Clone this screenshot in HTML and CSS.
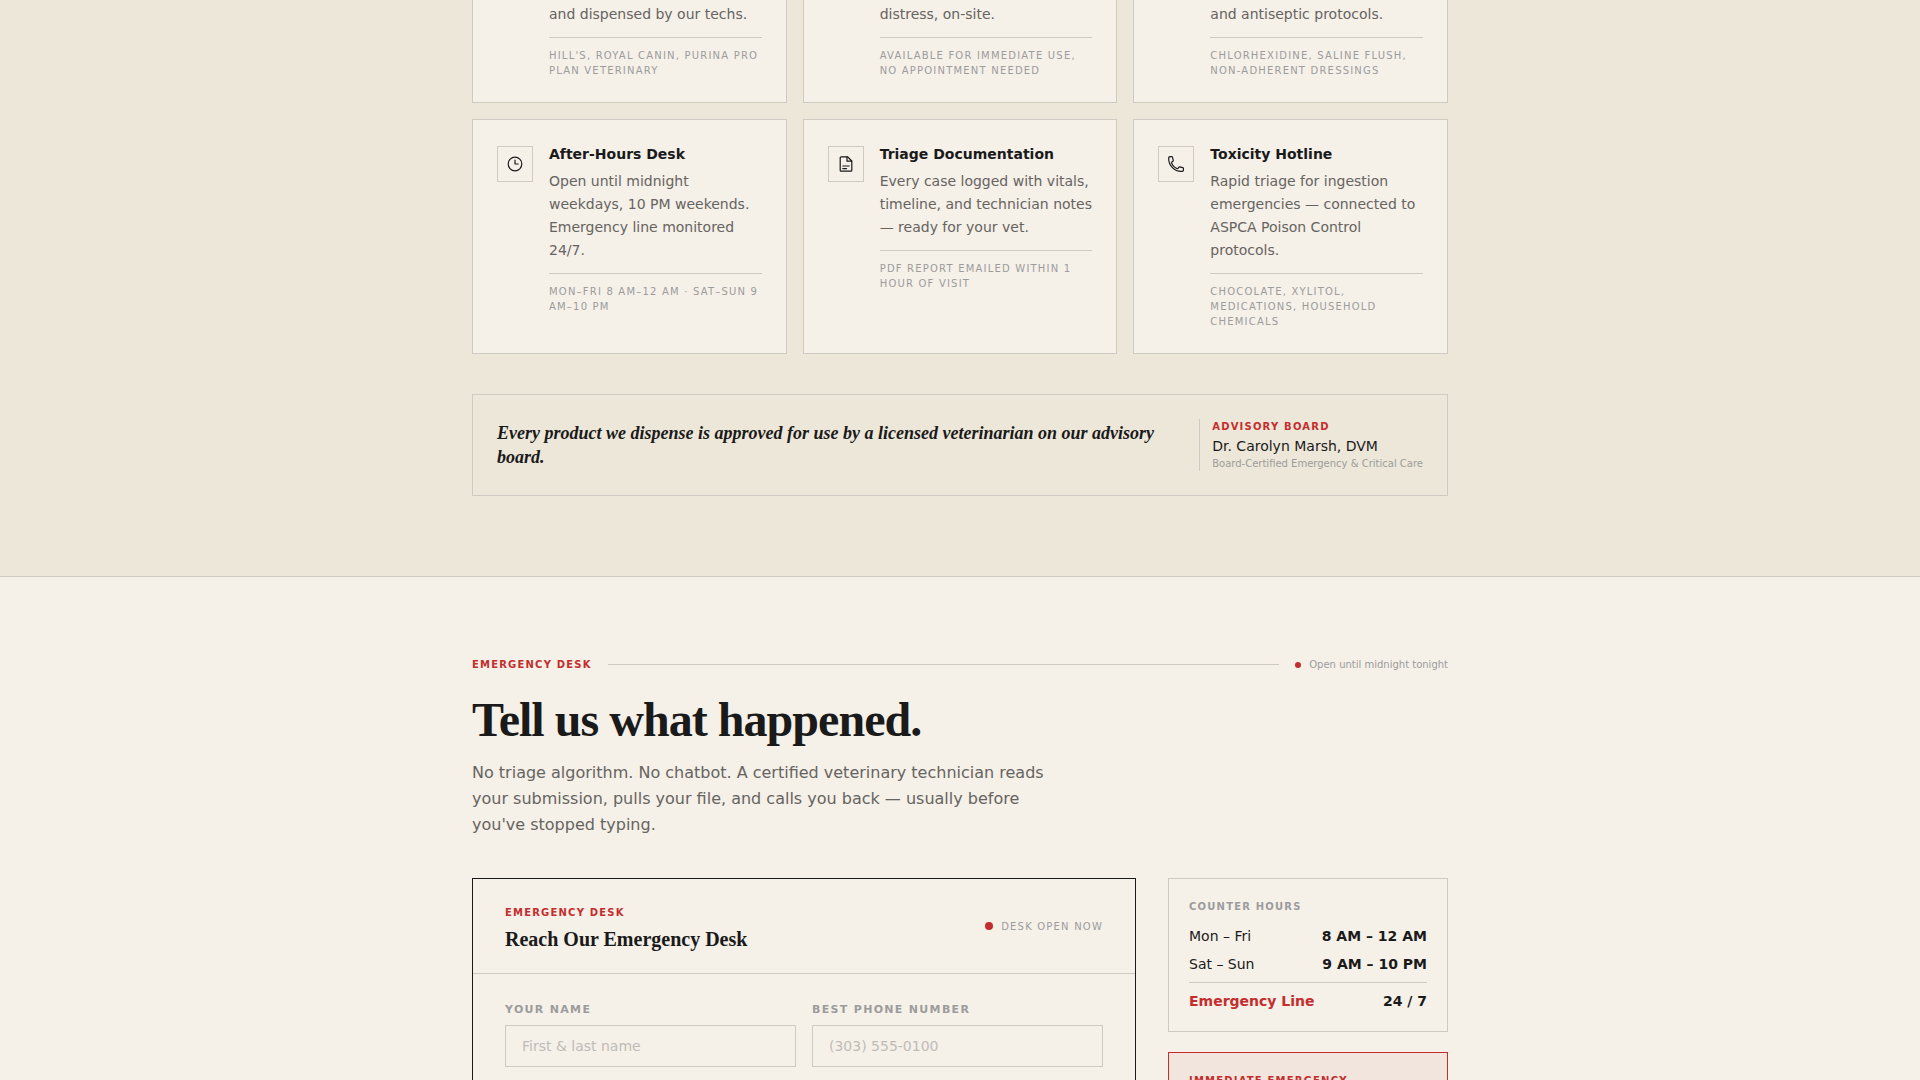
FILE: index.html
```html
<!DOCTYPE html>
<html lang="en">
<head>
  <meta charset="UTF-8" />
  <meta name="viewport" content="width=device-width, initial-scale=1.0" />
  <title>Emergency Desk</title>
  <link rel="stylesheet" href="styles.css">
</head>
<body>
  <section class="supplies">
    <div class="container">
      <div class="card-grid">
        <article class="card card-cut">
          <div class="card-body">
            <p class="card-text">and dispensed by our techs.</p>
            <p class="card-meta">Hill's, Royal Canin, Purina Pro Plan Veterinary</p>
          </div>
        </article>
        <article class="card card-cut">
          <div class="card-body">
            <p class="card-text">distress, on-site.</p>
            <p class="card-meta">Available for immediate use, no appointment needed</p>
          </div>
        </article>
        <article class="card card-cut">
          <div class="card-body">
            <p class="card-text">and antiseptic protocols.</p>
            <p class="card-meta">Chlorhexidine, saline flush, non-adherent dressings</p>
          </div>
        </article>

        <article class="card">
          <div class="card-icon">
            <svg viewBox="0 0 16 16" width="16" height="16" aria-hidden="true">
              <circle cx="8" cy="8" r="6.8" />
              <path d="M8 4v4h3.2" />
            </svg>
          </div>
          <div class="card-body">
            <h3>After-Hours Desk</h3>
            <p class="card-text">Open until midnight weekdays, 10 PM weekends. Emergency line monitored 24/7.</p>
            <p class="card-meta">Mon–Fri 8 AM–12 AM · Sat–Sun 9 AM–10 PM</p>
          </div>
        </article>
        <article class="card">
          <div class="card-icon">
            <svg viewBox="0 0 16 16" width="16" height="16" aria-hidden="true">
              <path d="M9.5 .8H3.1a.9.9 0 0 0-.9.9v12.6a.9.9 0 0 0 .9.9h9.800a.9.9 0 0 0 .9-.9V5z" />
              <path d="M9 .8v4.400h4.600" />
              <path d="M4.800 10h6.400M4.800 12.600h3.800" />
            </svg>
          </div>
          <div class="card-body">
            <h3>Triage Documentation</h3>
            <p class="card-text">Every case logged with vitals, timeline, and technician notes — ready for your vet.</p>
            <p class="card-meta">PDF report emailed within 1 hour of visit</p>
          </div>
        </article>
        <article class="card">
          <div class="card-icon">
            <svg viewBox="0 0 16 16" width="16" height="16" aria-hidden="true">
              <path d="M.7 2.8C.7 9.6 6.4 15.3 13.2 15.3h1a1.4 1.4 0 0 0 1.3-1.4v-1.2a1 1 0 0 0-.8-1l-2.9-.8a1 1 0 0 0-1 .4l-.8 1.1a.7.7 0 0 1-.8.2A9.3 9.3 0 0 1 3.6 6.9a.7.7 0 0 1 .2-.8l1.1-.8a1 1 0 0 0 .4-1L4.5 1.4a1 1 0 0 0-1-.8H2.1A1.4 1.4 0 0 0 .7 2z" />
            </svg>
          </div>
          <div class="card-body">
            <h3>Toxicity Hotline</h3>
            <p class="card-text">Rapid triage for ingestion emergencies — connected to ASPCA Poison Control protocols.</p>
            <p class="card-meta">Chocolate, xylitol, medications, household chemicals</p>
          </div>
        </article>
      </div>

      <div class="advisory">
        <p class="advisory-quote">Every product we dispense is approved for use by a licensed veterinarian on our advisory board.</p>
        <div class="advisory-person">
          <p class="eyebrow">Advisory Board</p>
          <p class="person-name">Dr. Carolyn Marsh, DVM</p>
          <p class="person-role">Board-Certified Emergency &amp; Critical Care</p>
        </div>
      </div>
    </div>
  </section>

  <section class="desk">
    <div class="container">
      <div class="section-bar">
        <span class="eyebrow">Emergency Desk</span>
        <span class="rule"></span>
        <span class="open-note"><span class="dot dot-small"></span>Open until midnight tonight</span>
      </div>
      <h1>Tell us what happened.</h1>
      <p class="lead">No triage algorithm. No chatbot. A certified veterinary technician reads your submission, pulls your file, and calls you back — usually before you've stopped typing.</p>

      <div class="desk-grid">
        <form class="desk-form">
          <div class="form-head">
            <div>
              <p class="eyebrow">Emergency Desk</p>
              <h2>Reach Our Emergency Desk</h2>
            </div>
            <span class="desk-status"><span class="dot"></span>Desk open now</span>
          </div>
          <div class="form-body">
            <div class="field">
              <label for="name">Your Name</label>
              <input type="text" id="name" placeholder="First &amp; last name" />
            </div>
            <div class="field">
              <label for="phone">Best Phone Number</label>
              <input type="tel" id="phone" placeholder="(303) 555-0100" />
            </div>
          </div>
        </form>

        <aside class="sidebar">
          <div class="hours">
            <h4>Counter Hours</h4>
            <table>
              <tr><th scope="row">Mon – Fri</th><td>8 AM – 12 AM</td></tr>
              <tr><th scope="row">Sat – Sun</th><td>9 AM – 10 PM</td></tr>
              <tr class="line-row"><th scope="row">Emergency Line</th><td>24 / 7</td></tr>
            </table>
          </div>
          <div class="alert">
            <p class="eyebrow">Immediate Emergency</p>
          </div>
        </aside>
      </div>
    </div>
  </section>
</body>
</html>
```
FILE: styles.css
```css
:root {
  --paper: #f5f0e8;
  --sand: #ede7d9;
  --line: #d0cbc2;
  --ink: #1a1a1a;
  --text: #666460;
  --muted: #9c9c9c;
  --red: #c42d2d;
  --serif: "Liberation Serif", Georgia, serif;
}
* {
  box-sizing: border-box;
  margin: 0;
  padding: 0;
}
body {
  height: 100vh;
  overflow: hidden;
  background: var(--paper);
  color: var(--ink);
  font-family: "DejaVu Sans", sans-serif;
  font-size: 14px;
}
.container {
  max-width: 1024px;
  margin: 0 auto;
  padding: 0 24px;
}
.eyebrow {
  color: var(--red);
  font-size: 10px;
  font-weight: bold;
  line-height: 15px;
  letter-spacing: 0.12em;
  text-transform: uppercase;
}

/* service cards */
.supplies {
  background: var(--sand);
  border-bottom: 1px solid var(--line);
  padding-bottom: 80px;
}
.card-grid {
  display: grid;
  grid-template-columns: repeat(3, 1fr);
  gap: 16px;
}
.card {
  display: flex;
  gap: 16px;
  padding: 24px;
  background: var(--paper);
  border: 1px solid var(--line);
}
.card-cut {
  padding-top: 3px;
  padding-left: 76px;
  border-top: none;
}
.card-icon {
  display: flex;
  align-items: center;
  justify-content: center;
  flex-shrink: 0;
  width: 36px;
  height: 36px;
  margin-top: 2px;
  border: 1px solid var(--line);
}
.card-icon svg {
  fill: none;
  stroke: var(--ink);
  stroke-width: 1.2;
  stroke-linecap: round;
  stroke-linejoin: round;
}
.card-body {
  flex: 1;
}
.card h3 {
  margin-bottom: 5px;
  font-size: 14px;
  line-height: 21px;
}
.card-text {
  color: var(--text);
  line-height: 23px;
}
.card-meta {
  margin-top: 11px;
  padding-top: 10px;
  border-top: 1px solid var(--line);
  color: var(--muted);
  font-size: 10px;
  line-height: 15px;
  letter-spacing: 0.12em;
  text-transform: uppercase;
}

/* advisory strip */
.advisory {
  display: flex;
  align-items: center;
  justify-content: space-between;
  gap: 24px;
  margin-top: 40px;
  padding: 24px;
  border: 1px solid var(--line);
}
.advisory-quote {
  font-family: var(--serif);
  font-size: 18px;
  font-style: italic;
  font-weight: bold;
  line-height: 24px;
}
.advisory-person {
  flex-shrink: 0;
  padding-left: 12px;
  border-left: 1px solid var(--line);
}
.person-name {
  margin-top: 2px;
  line-height: 20px;
}
.person-role {
  color: var(--muted);
  font-size: 10px;
  line-height: 15px;
}

/* emergency desk */
.desk {
  padding: 80px 0;
}
.section-bar {
  display: flex;
  align-items: center;
  gap: 16px;
  margin-bottom: 24px;
}
.rule {
  flex: 1;
  height: 1px;
  background: var(--line);
}
.open-note,
.desk-status {
  display: flex;
  align-items: center;
  gap: 8px;
  color: var(--muted);
  font-size: 10px;
  line-height: 15px;
}
.dot {
  width: 8px;
  height: 8px;
  border-radius: 50%;
  background: var(--red);
}
.dot-small {
  width: 6px;
  height: 6px;
}
h1 {
  margin-bottom: 16px;
  font-family: var(--serif);
  font-size: 48px;
  line-height: 48px;
  letter-spacing: -0.02em;
}
.lead {
  max-width: 580px;
  margin-bottom: 40px;
  color: var(--text);
  font-size: 16px;
  line-height: 26px;
}
.desk-grid {
  display: grid;
  grid-template-columns: 1fr 280px;
  gap: 32px;
}
.desk-form {
  border: 1px solid var(--ink);
}
.form-head {
  display: flex;
  align-items: center;
  justify-content: space-between;
  padding: 23px 32px;
  border-bottom: 1px solid var(--line);
}
.form-head .eyebrow {
  margin-bottom: 4px;
  line-height: 22px;
}
.form-head h2 {
  font-family: var(--serif);
  font-size: 20px;
  line-height: 22px;
}
.desk-status {
  letter-spacing: 0.12em;
  text-transform: uppercase;
}
.form-body {
  display: grid;
  grid-template-columns: 1fr 1fr;
  gap: 16px;
  padding: 28px 32px;
}
.field label {
  display: block;
  margin-bottom: 8px;
  color: var(--muted);
  font-size: 11px;
  font-weight: bold;
  line-height: 15px;
  letter-spacing: 0.12em;
  text-transform: uppercase;
}
.field input {
  width: 100%;
  height: 42px;
  padding: 0 16px;
  background: transparent;
  border: 1px solid var(--line);
  border-radius: 0;
  color: var(--ink);
  font-family: inherit;
  font-size: 14px;
}
.field input::placeholder {
  color: #bfbcb7;
}

/* sidebar */
.sidebar {
  display: flex;
  flex-direction: column;
  gap: 20px;
}
.hours,
.alert {
  padding: 20px;
  border: 1px solid var(--line);
}
.hours h4 {
  margin-bottom: 8px;
  color: var(--muted);
  font-size: 10px;
  line-height: 15px;
  letter-spacing: 0.12em;
  text-transform: uppercase;
}
.hours table {
  width: 100%;
  border-spacing: 0;
}
.hours th,
.hours td {
  padding: 4px 0;
  line-height: 20px;
}
.hours th {
  font-weight: normal;
  text-align: left;
}
.hours td {
  font-weight: bold;
  text-align: right;
}
.hours tr:nth-child(2) > * {
  padding-bottom: 8px;
}
.hours .line-row > * {
  padding: 8px 0 0;
  border-top: 1px solid var(--line);
}
.hours .line-row th {
  color: var(--red);
  font-weight: bold;
}
.alert {
  background: #f2e5de;
  border-color: var(--red);
}
```
